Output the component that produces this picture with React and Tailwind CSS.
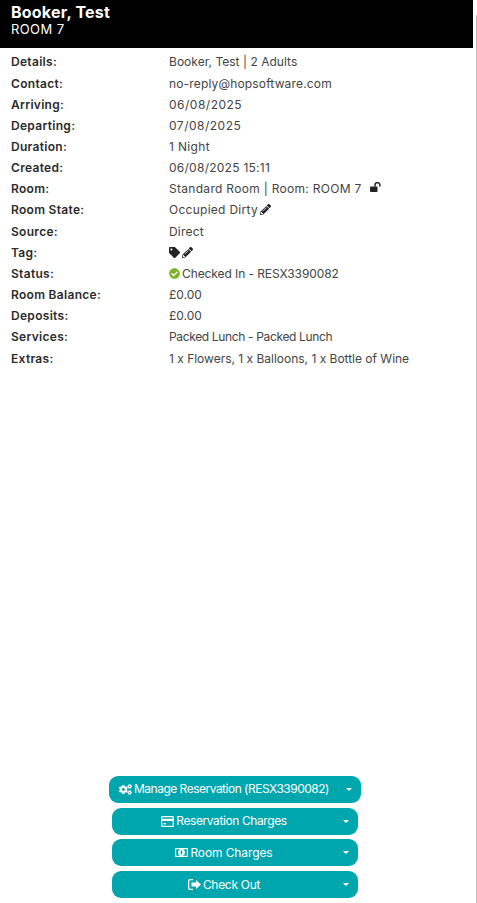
import { FaCogs, FaPencilAlt, FaTag, FaCheckCircle } from "react-icons/fa";

const Pencil = () => <FaPencilAlt className="inline-block text-[11px] text-[#222] ml-[2px] align-[-1px]" />;

// open padlock, shackle swings out to the right
const Unlock = () => (
  <svg viewBox="0 0 12 10" className="inline-block w-[12px] h-[10px] ml-[8px] align-[1px] text-[#222]">
    <rect x="0" y="4.5" width="7.5" height="5.5" rx="0.8" fill="currentColor" />
    <path d="M5 4.5V3a2.4 2.4 0 0 1 4.8 0v1.4" fill="none" stroke="currentColor" strokeWidth="1.5" />
  </svg>
);

const CardIcon = () => (
  <svg viewBox="0 0 14 12" className="w-[13px] h-[11px]" fill="currentColor">
    <path fillRule="evenodd" d="M1.5 0h11A1.5 1.5 0 0 1 14 1.5v9a1.5 1.5 0 0 1-1.5 1.5h-11A1.5 1.5 0 0 1 0 10.500v-9A1.500 1.500 0 0 1 1.500 0ZM1.300 1.300v1.700h11.400V1.300ZM1.300 5.500v5.200h11.400V5.500Z" />
    <rect x="2.300" y="7.800" width="3.200" height="1.300" />
  </svg>
);

const MoneyIcon = () => (
  <svg viewBox="0 0 13 9" className="w-[13px] h-[9px]">
    <rect width="13" height="9" rx="1" fill="#fff" />
    <rect x="1.200" y="1.200" width="10.600" height="6.600" fill="#00a6ad" />
    <circle cx="6.500" cy="4.500" r="3.400" fill="#fff" />
    <rect x="5.700" y="2.600" width="1.600" height="3.800" fill="#00a6ad" />
  </svg>
);

const ExitIcon = () => (
  <svg viewBox="0 0 13 11" className="w-[13px] h-[11px]" fill="currentColor">
    <path d="M1.800 0H5v1.300H2a.7.7 0 0 0-.7.7v7a.7.7 0 0 0 .7.700h3V11H1.800A1.800 1.800 0 0 1 0 9.200V1.800A1.800 1.800 0 0 1 1.800 0Z" />
    <path d="M8 1l5 4.500L8 10V7.400H3.500V3.600H8Z" />
  </svg>
);

const ROWS = [
  ["Details:", "Booker, Test | 2 Adults", "tracking-[0.03px]"],
  ["Contact:", "no-reply@hopsoftware.com", "tracking-[0.16px]"],
  ["Arriving:", "06/08/2025", "tracking-[0.5px]"],
  ["Departing:", "07/08/2025", "tracking-[0.5px]"],
  ["Duration:", "1 Night", "tracking-[0.35px]"],
  ["Created:", "06/08/2025 15:11", "tracking-[0.26px]"],
  ["Room:", <>Standard Room | Room: ROOM 7<Unlock /></>, "tracking-[0.3px]"],
  ["Room State:", <>Occupied Dirty<Pencil /></>, "tracking-[0.27px]"],
  ["Source:", "Direct", "tracking-[0.2px]"],
  ["Tag:", <><FaTag className="inline-block text-[11px] text-[#222] align-[-1px]" /><Pencil /></>, ""],
  ["Status:", <><FaCheckCircle className="inline-block text-[11px] text-[#7cb228] mr-[2px] align-[-1px]" />Checked In - RESX3390082</>, "tracking-[-0.09px]"],
  ["Room Balance:", "£0.00", "tracking-[0px]"],
  ["Deposits:", "£0.00", "tracking-[0px]"],
  ["Services:", "Packed Lunch - Packed Lunch", "tracking-[-0.35px]"],
  ["Extras:", "1 x Flowers, 1 x Balloons, 1 x Bottle of Wine", "tracking-[-0.01px]"],
];

const BUTTONS = [
  { label: "Manage Reservation (RESX3390082)", Icon: FaCogs, wide: true, track: "tracking-[-0.5px]" },
  { label: "Reservation Charges", Icon: CardIcon, track: "tracking-[-0.4px]" },
  { label: "Room Charges", Icon: MoneyIcon, track: "tracking-[-0.1px]" },
  { label: "Check Out", Icon: ExitIcon, track: "tracking-[-0.3px]" },
];

function ActionButton({ label, Icon, wide, track }) {
  return (
    <div className={`flex items-center h-[27px] rounded-[9px] bg-[#00a6ad] text-white text-[12px] ${wide ? "w-[252px]" : "w-[246px]"}`}>
      <div className="flex-1 flex items-center justify-center gap-[2px]">
        <Icon className="text-[13px]" />
        <span className={track}>{label}</span>
      </div>
      <div className="w-[22px] flex justify-center pr-[2px]">
        <span className="w-0 h-0 border-x-[3px] border-x-transparent border-t-[3px] border-t-white" />
      </div>
    </div>
  );
}

export default function App() {
  return (
    <div className="h-[903px] w-[477px] flex bg-white font-['Inter','Noto_Sans',sans-serif] overflow-hidden">
      <div className="w-[473px] flex flex-col">
        <div className="h-[48px] bg-black text-white pl-[11px] pt-[3px]">
          <div className="text-[16px] leading-[18px] font-bold tracking-[0.2px]">Booker, Test</div>
          <div className="text-[13px] leading-[17px] tracking-[0.4px]">ROOM 7</div>
        </div>
        <div className="pt-[3.800px] pl-[11px] text-[12px]">
          {ROWS.map(([k, v, track]) => (
            <div key={k} className="flex h-[21.170px] items-center">
              <div className="w-[158px] font-semibold text-[#2b2b2b] tracking-[0.3px]">{k}</div>
              <div className={`text-[#444] ${track}`}>{v}</div>
            </div>
          ))}
        </div>
        <div className="mt-auto pb-[5px] pr-[3px] flex flex-col items-center gap-[4.700px]">
          {BUTTONS.map(b => <ActionButton key={b.label} {...b} />)}
        </div>
      </div>
      <div className="w-[4px] flex justify-end">
        <div className="w-[1px] h-full mt-[15px] bg-[#bdbdbd]" />
      </div>
    </div>
  );
}
